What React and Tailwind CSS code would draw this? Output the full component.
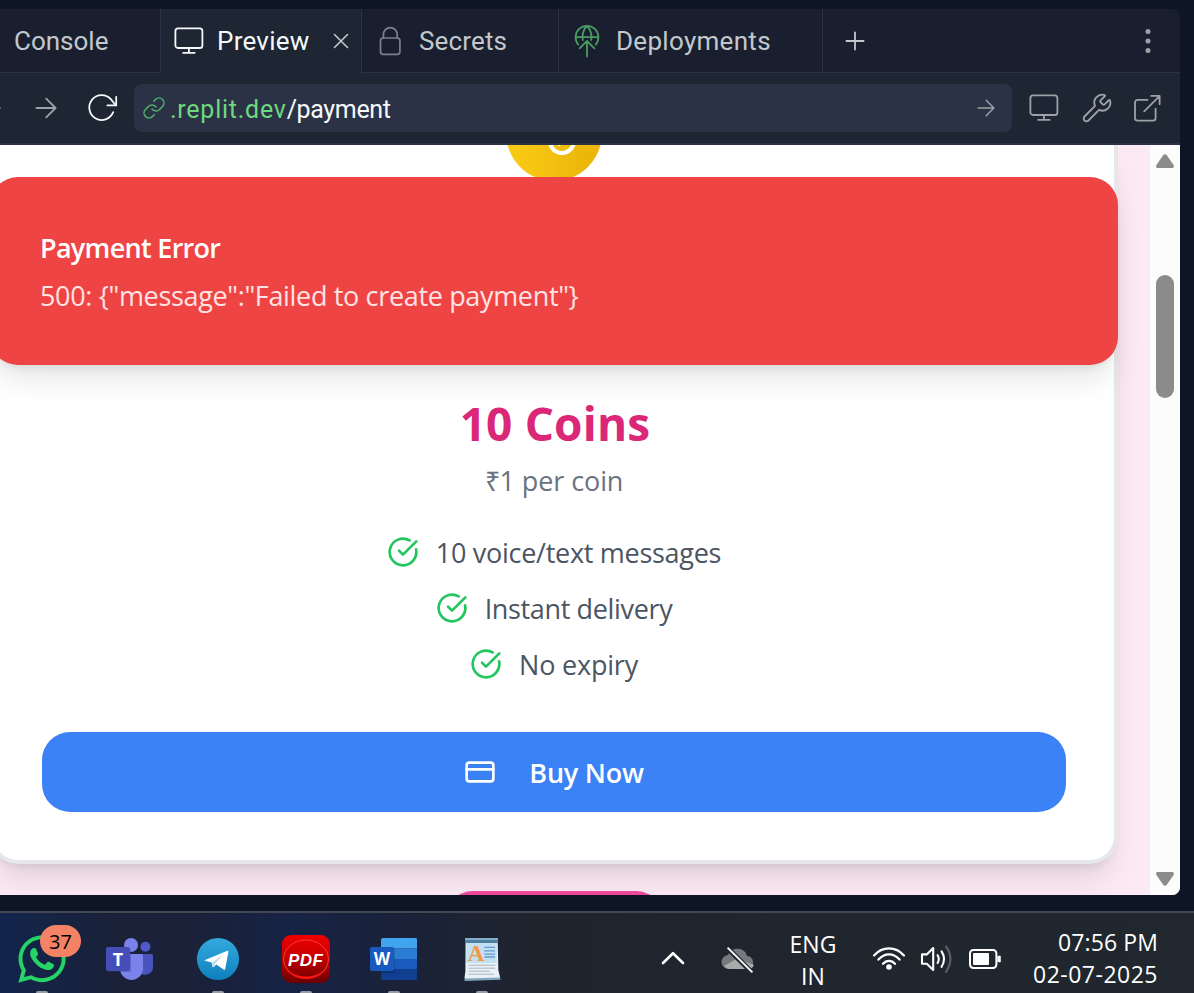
import { CircleCheckBig, Coins, CreditCard, Link, Wrench } from "lucide-react";
import { FaWhatsapp } from "react-icons/fa";

const stroke = { fill: "none", stroke: "currentColor", strokeLinecap: "round", strokeLinejoin: "round" };

const MonitorIcon = ({ className }) => (
  <svg viewBox="0 0 32 32" className={className} {...stroke} strokeWidth="1.8">
    <rect x="2.4" y="3.4" width="27" height="19.6" rx="2.6" />
    <path d="M15.9 23V27.8M10.1 27.8H21.7" />
  </svg>
);

const LockIcon = () => (
  <svg viewBox="0 0 24 32" className="h-8 w-6" {...stroke} strokeWidth="1.7">
    <rect x="2.5" y="13" width="19.4" height="16.4" rx="2.6" />
    <path d="M5.4 13V9.5a6.9 6.9 0 0 1 13.8 0V13" />
  </svg>
);

const DeployIcon = () => (
  <svg viewBox="0 0 26 34" className="h-[34px] w-[26px] text-[#4a9b63]" {...stroke} strokeWidth="1.8">
    <path d="M4.3 20.6A11.4 11.4 0 1 1 21.7 20.6" />
    <path d="M1.8 13.2H24.2M13 2C10.2 4.6 8.6 8.6 8.5 13.2M13 2C15.8 4.6 17.4 8.6 17.5 13.2M8.5 13.2 8.8 16M17.5 13.2 17.2 16" />
    <path d="M13 32.6V17.4M5.6 24.4 13 17 20.4 24.4" />
  </svg>
);

const ReloadIcon = () => (
  <svg viewBox="0 0 32 32" className="h-8 w-8 text-[#f5f9fc]" {...stroke} strokeWidth="1.8">
    <path d="M27.2 20.2A12.4 12.4 0 1 1 25 7.4L29.8 13.2" />
    <path d="M30.2 5V13.4H21.4" />
  </svg>
);

const ExternalIcon = () => (
  <svg viewBox="0 0 28 28" className="h-7 w-7" {...stroke} strokeWidth="1.8">
    <path d="M14.6 5.8H4.6a2.6 2.6 0 0 0-2.6 2.6V24a2.6 2.6 0 0 0 2.6 2.6H20a2.6 2.6 0 0 0 2.6-2.6V14.6M18.2 1.9H26.6V10.2M26.2 2.3 11.2 17.3" />
  </svg>
);

const ArrowIcon = ({ className }) => (
  <svg viewBox="0 0 22 22" className={className} {...stroke} strokeWidth="1.8">
    <path d="M1.4 11H20.4M11.2 1.6 20.6 11 11.2 20.4" />
  </svg>
);

const TabBar = () => (
  <div className="flex h-16 shrink-0 text-[26px] text-[#c2c8cc]">
    <div className="flex w-[161px] items-center border-r border-b border-[#2b3245] bg-[#191f2e] pt-[2px] pl-[14px]">Console</div>
    <div className="flex w-[201px] items-center border-r border-[#2b3245] bg-[#1e2533] pl-[12px] tracking-[0.25px] text-[#f5f9fc]">
      <MonitorIcon className="h-8 w-8" />
      <span className="ml-[12px] w-[116px] pt-[1px]">Preview</span>
      <svg viewBox="0 0 16 16" className="h-4 w-4 text-[#c2c8cc]" {...stroke} strokeWidth="1.6">
        <path d="M1.5 1.5 14.5 14.5M14.5 1.5 1.5 14.5" />
      </svg>
    </div>
    <div className="flex w-[197px] items-center border-r border-b border-[#2b3245] bg-[#191f2e] pl-4 tracking-[0.15px]">
      <span className="text-[#7b818a]"><LockIcon /></span>
      <span className="ml-[17px] pt-[2px]">Secrets</span>
    </div>
    <div className="flex w-[264px] items-center border-r border-b border-[#2b3245] bg-[#191f2e] pl-[15px] tracking-[0.3px]">
      <DeployIcon />
      <span className="ml-4 pt-[2px]">Deployments</span>
    </div>
    <div className="flex flex-1 items-center justify-between rounded-tr-lg border-b border-[#2b3245] bg-[#191f2e] pr-[27px] pl-[22px]">
      <svg viewBox="0 0 20 20" className="h-5 w-5" {...stroke} strokeWidth="1.8">
        <path d="M1.4 10H18.6M10 1.4V18.6" />
      </svg>
      <svg viewBox="0 0 10 26" className="h-[26px] w-[10px] fill-[#9da2a6]">
        <circle cx="5" cy="3.6" r="2.5" />
        <circle cx="5" cy="13" r="2.5" />
        <circle cx="5" cy="22.4" r="2.5" />
      </svg>
    </div>
  </div>
);

const Toolbar = () => (
  <div className="flex h-[72px] shrink-0 items-center border-b-2 border-[#2b3245] bg-[#1e2533] text-[#9da2a6]">
    <div className="h-[2px] w-[1px] bg-[#5b616c]" />
    <ArrowIcon className="ml-[34px] h-[22px] w-[22px]" />
    <div className="ml-[29px]"><ReloadIcon /></div>
    <div className="ml-4 flex h-12 w-[878px] items-center rounded-lg bg-[#2b3245] pr-[17px] pl-2 text-[25px]">
      <Link className="h-6 w-6 text-[#52b36c]" strokeWidth={1.5} />
      <span className="ml-[4px] pt-[3px] tracking-[0.75px] text-[#6cd97e]">.replit.dev</span>
      <span className="pt-[3px] tracking-[-0.35px] text-[#f5f9fc]">/payment</span>
      <ArrowIcon className="ml-auto h-[18px] w-[18px]" />
    </div>
    <MonitorIcon className="ml-4 h-8 w-8" />
    <Wrench className="ml-[21px] h-8 w-8" strokeWidth={1.4} />
    <div className="ml-5"><ExternalIcon /></div>
  </div>
);

const Feature = ({ children, className }) => (
  <div className="flex h-10 items-center gap-[17px]">
    <CircleCheckBig className="h-8 w-8 text-[#22c55e]" strokeWidth={2} />
    <span className={className}>{children}</span>
  </div>
);

const PaymentPage = () => (
  <div className="relative flex min-h-0 flex-1 overflow-hidden rounded-br-lg bg-[#fbe9f3] font-['Open_Sans',sans-serif] text-[27px] leading-10">
    <div className="relative min-w-0 flex-1 overflow-hidden">
      <div className="-ml-[10px] flex h-[719px] w-[1128px] flex-col items-center rounded-b-[28px] border-4 border-t-0 border-[#e5e7eb] bg-white px-12 shadow-[0_20px_30px_-6px_rgba(0,0,0,0.1),0_8px_12px_-8px_rgba(0,0,0,0.12)]">
        <div className="-mt-[60px] flex h-24 w-24 shrink-0 items-center justify-center rounded-full bg-linear-to-r from-[#facc15] to-[#eab308]">
          <Coins className="h-12 w-12 text-white" strokeWidth={2} />
        </div>
        <h2 className="mt-[206px] pl-[2px] text-[46px] leading-[72px] font-bold tracking-[0.15px] text-[#db2777]">10 Coins</h2>
        <p className="mt-[2px] tracking-[-0.1px] text-[#6b7280]">₹1 per coin</p>
        <div className="mt-[31px] flex flex-col items-center gap-4 text-[#4b5563]">
          <Feature className="pt-[2px] tracking-[-0.28px]">10 voice/text messages</Feature>
          <Feature className="pt-[2px] tracking-[-0.35px]">Instant delivery</Feature>
          <Feature className="pt-[2px] tracking-[-0.2px]">No expiry</Feature>
        </div>
        <button className="mt-12 flex h-20 w-full items-center justify-center gap-[33px] rounded-[28px] bg-[#3b82f6] font-semibold text-white">
          <CreditCard className="h-8 w-8" strokeWidth={2} />
          <span className="pt-[2px] tracking-[-0.25px]">Buy Now</span>
        </button>
      </div>
      <div className="mt-[27px] ml-[445px] h-20 w-[219px] rounded-[28px] bg-[#ec4899]" />
      <div className="absolute top-8 -left-[10px] h-[188px] w-[1128px] rounded-[28px] bg-[#ef4444] px-[50px] pt-[51px] text-white shadow-[0_20px_30px_-6px_rgba(0,0,0,0.1),0_8px_12px_-8px_rgba(0,0,0,0.12)]">
        <p className="font-semibold tracking-[-0.7px]">Payment Error</p>
        <p className="mt-2 tracking-[-0.34px] text-[#fde3e3]">500: {'{"message":"Failed to create payment"}'}</p>
      </div>
    </div>
    <div className="flex w-[30px] flex-col items-center bg-[#fcfcfc] py-2 text-[#8b8b8b]">
      <svg viewBox="0 0 20 16" className="h-4 w-5 fill-current">
        <path d="M8.2 2.2Q10 .2 11.8 2.2L18.6 12Q19.6 14.6 17.4 15H2.6Q.4 14.6 1.4 12Z" />
      </svg>
      <div className="mt-[106px] h-[123px] w-[18px] rounded-full bg-[#8b8b8b]" />
      <svg viewBox="0 0 20 16" className="mt-auto h-4 w-5 fill-current">
        <path d="M8.2 13.8Q10 15.8 11.8 13.8L18.6 4Q19.6 1.4 17.4 1H2.6Q.4 1.4 1.4 4Z" />
      </svg>
    </div>
  </div>
);

const TeamsIcon = () => (
  <svg viewBox="0 0 48 48" className="h-12 w-12">
    <circle cx="39.4" cy="11.8" r="5" fill="#5059c9" />
    <path d="M31 19H45.4a1.6 1.6 0 0 1 1.6 1.6V31a8 8 0 0 1-14 6Z" fill="#4b53bc" />
    <circle cx="25" cy="10" r="7" fill="#7b83eb" />
    <path d="M14 19H35.4a1.6 1.6 0 0 1 1.6 1.6V33.4a11.5 11.5 0 0 1-23 0Z" fill="#7b83eb" />
    <rect x="1" y="13" width="23" height="23" rx="2" fill="#2f3790" opacity=".35" transform="translate(1 1)" />
    <rect x="0" y="12" width="24" height="24" rx="2" fill="#454eb8" />
    <text x="12" y="31" textAnchor="middle" fontSize="18" fontWeight="700" fill="#fff" fontFamily="Open Sans">T</text>
  </svg>
);

const TelegramIcon = () => (
  <svg viewBox="0 0 48 48" className="h-12 w-12">
    <defs>
      <linearGradient id="tg" x1="0" y1="0" x2="0" y2="1">
        <stop offset="0" stopColor="#34aadf" />
        <stop offset="1" stopColor="#0e7fbb" />
      </linearGradient>
    </defs>
    <circle cx="24" cy="24" r="21.1" fill="url(#tg)" />
    <path d="M11 25 33.4 15.8Q34.6 15.6 34.4 17L31.2 34Q30.6 35.4 29.4 34.6L22.4 29.4 19.6 32Q18.6 32.8 18.4 31.4L17.6 27.6 11.2 25.8Q10.2 25.4 11 25Z" fill="#fff" />
    <path d="M18 27.8 29.6 19.6 21 28.6 20.2 32 19 31.8Z" fill="#bcd9ea" />
  </svg>
);

const PdfIcon = () => (
  <svg viewBox="0 0 48 48" className="h-12 w-12">
    <defs>
      <linearGradient id="pdf" x1="0" y1="0" x2="0" y2="1">
        <stop offset="0" stopColor="#f00000" />
        <stop offset=".45" stopColor="#c80000" />
        <stop offset="1" stopColor="#6a0000" />
      </linearGradient>
    </defs>
    <rect width="48" height="48" rx="9" fill="url(#pdf)" />
    <ellipse cx="24" cy="24" rx="22.4" ry="19" fill="none" stroke="#ff3c3c" strokeWidth="1" />
    <path d="M1.6 26A22.4 18 0 0 0 46.4 26A22.4 15.4 0 0 1 1.6 26Z" fill="#fa1414" />
    <text x="23.4" y="31" textAnchor="middle" textLength="35" fontSize="17" fontWeight="700" fontStyle="italic" fill="#fff" fontFamily="Liberation Sans">PDF</text>
  </svg>
);

const WordIcon = () => (
  <svg viewBox="0 0 48 48" className="h-12 w-12">
    <path d="M13 3H45.6A1.4 1.4 0 0 1 47 4.4V13.5H11V5a2 2 0 0 1 2-2Z" fill="#41a5ee" />
    <path d="M11 13.5H47V24H11Z" fill="#2b7cd3" />
    <path d="M11 24H47V34.5H11Z" fill="#185abd" />
    <path d="M11 34.5H47V43.6A1.4 1.4 0 0 1 45.6 45H13a2 2 0 0 1-2-2Z" fill="#103f91" />
    <path d="M11 13H24.6V38H11Z" fill="#000" opacity=".22" />
    <rect x="0" y="12" width="24" height="24" rx="2" fill="#185abd" />
    <text x="12" y="30.2" textAnchor="middle" fontSize="17" fontWeight="700" fill="#fff" fontFamily="Open Sans">W</text>
  </svg>
);

const WordPadIcon = () => (
  <svg viewBox="0 0 48 48" className="h-12 w-12">
    <path d="M8 38 40.6 36 42.6 44.8 6.4 46Z" fill="#7fa7bd" />
    <path d="M7.6 3H39.6L40.4 36 42 42.4 6.4 43.4 7.4 36Z" fill="#e9f1f6" />
    <path d="M8.4 8H38.8V28H8.2Z" fill="#c3dff2" />
    <path d="M7.2 3H39.8V8H7.2Z" fill="#4d7f9f" />
    <path d="M7.2 3H39.8V5H7.2Z" fill="#83aeca" />
    <text x="18" y="26.2" textAnchor="middle" fontSize="23" fontWeight="700" fill="#f39a3e" fontFamily="Liberation Serif">A</text>
    <path d="M26.4 12.4H37M26.4 15.8H37M26.4 19.2H37M26.4 22H37" stroke="#5f9bd0" strokeWidth="1.3" />
    <path d="M10.6 30.2H37.4M10.6 33.2H37.4M10.6 36.2H32M10.6 39.2H36" stroke="#a9b4bf" strokeWidth="1" />
  </svg>
);

const Slot = ({ children, running = true }) => (
  <div className="flex h-[80px] w-[88px] shrink-0 flex-col items-center justify-between overflow-hidden pt-[22px]">
    {children}
    {running && <div className="h-[2px] w-3 rounded-t-[2px] bg-[#9a9ea6]" />}
  </div>
);

const Tray = () => (
  <div className="ml-auto flex items-start pr-9 text-[23px] leading-8 text-white">
    <svg viewBox="0 0 24 14" className="mt-[38px] h-[14px] w-6" {...stroke} strokeWidth="2.6">
      <path d="M2 12 12 2.2 22 12" />
    </svg>
    <svg viewBox="0 0 34 28" className="mt-[33px] ml-9 h-7 w-[34px]">
      <path d="M8 23a7 7 0 0 1-1-14A10 9.6 0 0 1 26 10a6.6 6.6 0 0 1 1 13Z" fill="#77797c" />
      <path d="M3 20 16 12.8 33 19A6.6 6 0 0 1 27 23H8A7 7 0 0 1 3 20Z" fill="#a8aaac" />
      <path d="M6.4 2 31 26.4" stroke="#20262d" strokeWidth="5" />
      <path d="M6.6 1.6 31.4 26.4" stroke="#fff" strokeWidth="2" />
    </svg>
    <div className="mt-[15px] ml-[34px] flex w-12 flex-col items-center">
      <span>ENG</span>
      <span>IN</span>
    </div>
    <svg viewBox="0 0 34 26" className="mt-8 ml-[35px] h-[26px] w-[34px]" {...stroke} strokeWidth="2.2">
      <path d="M2 10.4C10.5 1 23.5 1 32 10.4M6.4 14.6C12.6 7.6 21.4 7.6 27.6 14.6M11 18.8C14.4 14.8 19.6 14.8 23 18.8" />
      <circle cx="17" cy="22" r="2.8" fill="#fff" stroke="none" />
    </svg>
    <svg viewBox="0 0 34 30" className="mt-[31px] ml-[14px] h-[30px] w-[34px]" {...stroke} strokeWidth="2.1">
      <path d="M2 10.4H6.8L13.2 4V26L6.8 19.8H2Z" />
      <path d="M17.6 11.2Q20 15 17.6 19M21.6 7.4Q26.4 15 21.6 22.8" />
      <path d="M26 2.4Q34.8 15 26 27.8" stroke="#5c6167" />
    </svg>
    <svg viewBox="0 0 34 22" className="mt-[35px] ml-[14px] h-[22px] w-[34px]" {...stroke} strokeWidth="2">
      <rect x="2" y="2" width="26.4" height="18" rx="3.4" />
      <rect x="5" y="5" width="16" height="12" rx="1" fill="#fff" stroke="none" />
      <path d="M29.4 8H32.4V14H29.4Z" fill="#fff" stroke="none" />
      <path d="M31.6 8.6V13.4" />
    </svg>
    <div className="mt-[13px] ml-[31px] flex flex-col items-end">
      <span className="tracking-[0.1px]">07:56 PM</span>
      <span className="tracking-[0.5px]">02-07-2025</span>
    </div>
  </div>
);

const Taskbar = () => (
  <div className="mt-4 flex h-[82px] shrink-0 overflow-hidden border-t-2 border-[#454850] bg-linear-to-r from-[#12244c] from-0% via-[#1a2138] via-10% to-[#1a2138] to-20% font-['Open_Sans',sans-serif]">
    <div className="flex w-full bg-[linear-gradient(90deg,transparent_0,transparent_16%,#172345_24%,#1b2236_36%,#1f252e_45%,#20272e_100%)]">
      <div className="-ml-[2px] flex">
        <Slot>
          <div className="relative">
            <FaWhatsapp className="h-[54px] w-[54px] -translate-y-[3px] text-[#25d366]" />
            <div className="absolute -top-[10px] left-[25px] flex h-8 w-[41px] items-center justify-center rounded-full bg-[#f48366] pt-[1px] text-[20px] text-black">37</div>
          </div>
        </Slot>
        <Slot running={false}><TeamsIcon /></Slot>
        <Slot><TelegramIcon /></Slot>
        <Slot><PdfIcon /></Slot>
        <Slot><WordIcon /></Slot>
        <Slot><WordPadIcon /></Slot>
      </div>
      <Tray />
    </div>
  </div>
);

export default function App() {
  return (
    <div className="flex h-[993px] w-[1194px] flex-col overflow-hidden bg-[#0e1524] pt-[9px] font-['Roboto',sans-serif]">
      <div className="flex h-[886px] w-[1180px] shrink-0 flex-col">
        <TabBar />
        <Toolbar />
        <PaymentPage />
      </div>
      <Taskbar />
    </div>
  );
}
